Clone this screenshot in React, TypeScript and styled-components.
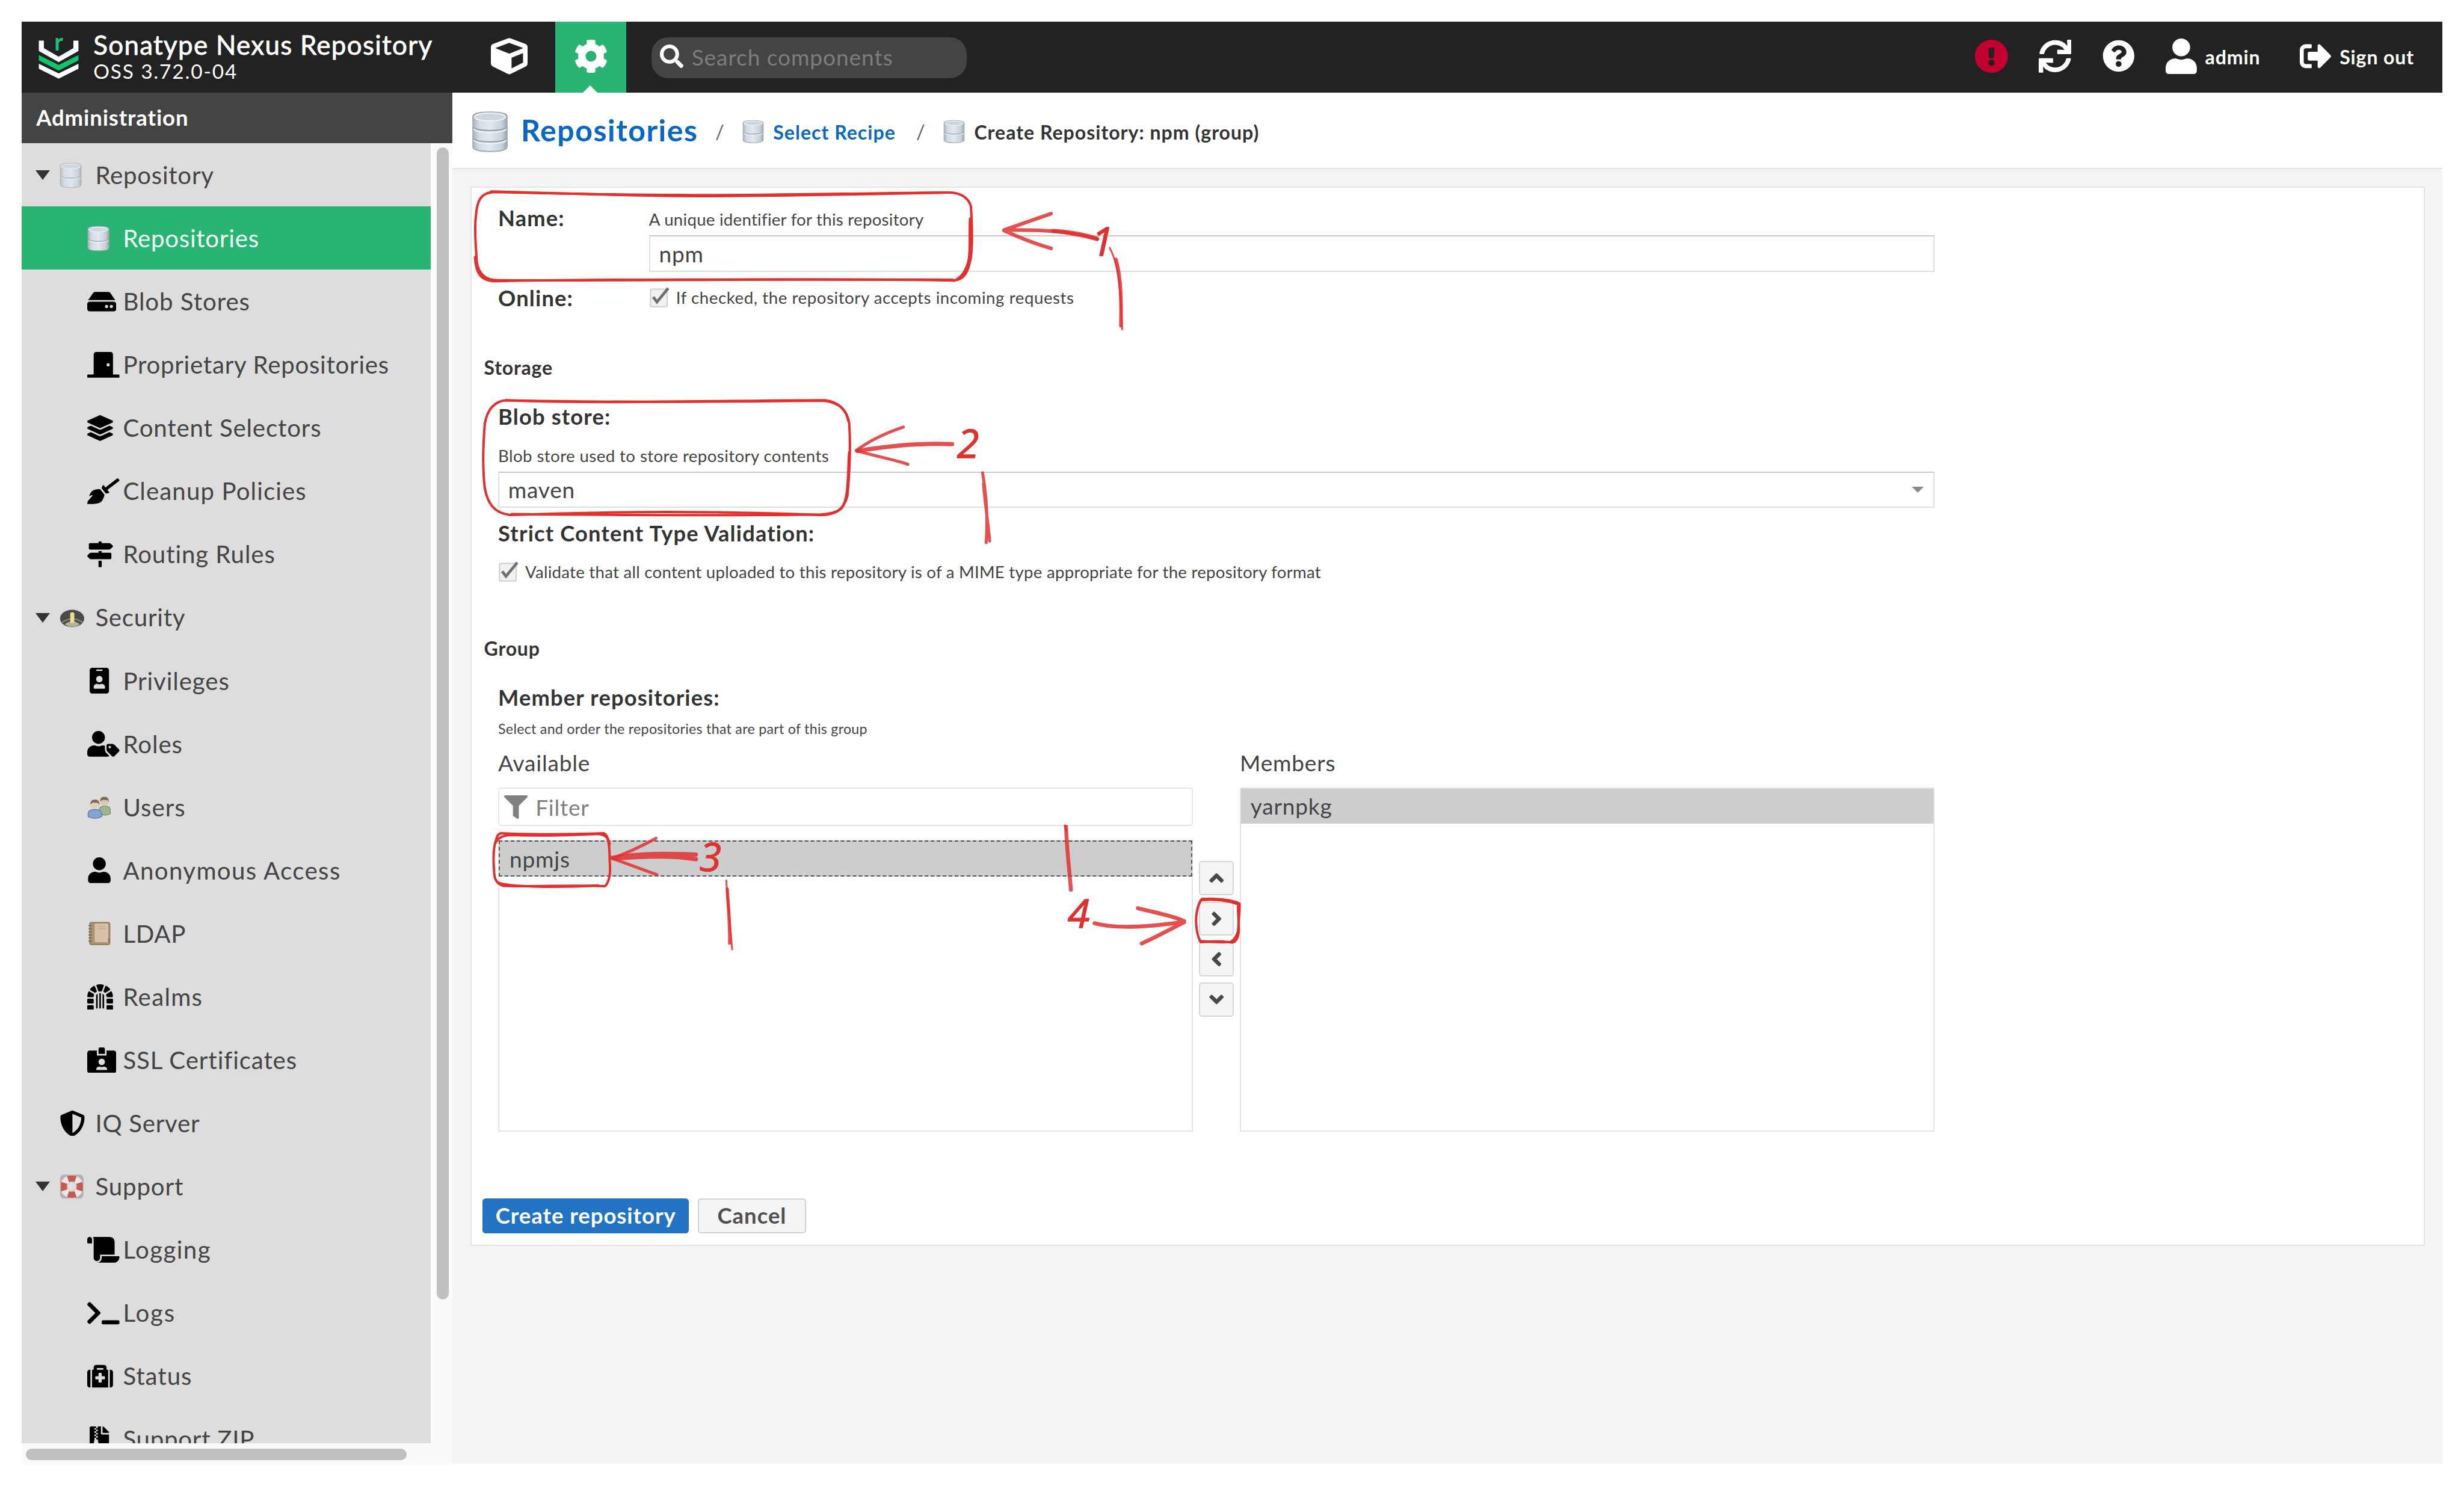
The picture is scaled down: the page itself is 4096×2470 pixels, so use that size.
import React from "react";
import styled, { createGlobalStyle, css } from "styled-components";
import {
  FaAngleDown,
  FaAngleLeft,
  FaAngleRight,
  FaAngleUp,
  FaBroom,
  FaCog,
  FaCube,
  FaDoorClosed,
  FaDungeon,
  FaExclamationCircle,
  FaFileArchive,
  FaFilter,
  FaHdd,
  FaIdBadge,
  FaIdCardAlt,
  FaLayerGroup,
  FaMapSigns,
  FaMedkit,
  FaQuestionCircle,
  FaScroll,
  FaSearch,
  FaShieldAlt,
  FaSignOutAlt,
  FaSync,
  FaTerminal,
  FaUser,
  FaUserTag,
} from "react-icons/fa";

/* 1rem is one layout unit: the page is 1568 units wide. */
const GlobalStyle = createGlobalStyle`
  html { font-size: calc(100vw / 1568); }
  *, *::before, *::after { box-sizing: border-box; }
  body { margin: 0; background: #fff; overflow: hidden; }
  body, input, button {
    font-family: Lato, "Open Sans", sans-serif;
    font-variant-ligatures: none;
  }
`;

const RED = "#e03131";

/* ---------- page frame ---------- */

const Page = styled.div`
  position: relative;
  height: 100vh;
  padding: 13.75rem 13.7rem 14rem 13.75rem;
  color: #333;
  line-height: 1;
`;

const Frame = styled.div`
  display: flex;
  flex-direction: column;
  height: 100%;
  background: #f4f4f4;
  overflow: hidden;
`;

const Body = styled.div`
  display: flex;
  flex: 1;
  min-height: 0;
`;

/* ---------- header ---------- */

const Header = styled.header`
  display: flex;
  align-items: center;
  flex: none;
  height: 45.3rem;
  padding: 0 16.5rem 0 10.5rem;
  background: #222;
  color: #fff;
`;

const LogoSvg = styled.svg`
  flex: none;
  width: 26.4rem;
  height: 28rem;
  margin-top: 1rem;
  overflow: visible;
`;

const Product = styled.div`
  display: flex;
  flex-direction: column;
  width: 244rem;
  padding-left: 8.8rem;
  white-space: nowrap;
`;

const ProductName = styled.div`
  font-size: 16.8rem;
  line-height: 18rem;
  letter-spacing: 0.5rem;
  -webkit-text-stroke: 0.3rem #fff;
`;

const ProductVersion = styled.div`
  font-size: 12.8rem;
  line-height: 15.6rem;
  letter-spacing: 0.7rem;
`;

const ModeTab = styled.div<{ $active?: boolean; $size: number }>`
  position: relative;
  display: flex;
  align-items: center;
  justify-content: center;
  height: 100%;
  width: ${(p) => (p.$active ? 45.4 : 58.6)}rem;
  background: ${(p) => (p.$active ? "#29b473" : "transparent")};
  svg {
    width: ${(p) => p.$size}rem;
    height: ${(p) => p.$size}rem;
    margin-bottom: 1.4rem;
  }
  ${(p) =>
    p.$active &&
    css`
      &::after {
        content: "";
        position: absolute;
        bottom: 0;
        left: 50%;
        margin-left: -4.8rem;
        border: 4.8rem solid transparent;
        border-top: 0;
        border-bottom-color: #fff;
      }
    `}
`;

const SearchBox = styled.div`
  display: flex;
  align-items: center;
  gap: 5.3rem;
  width: 200.5rem;
  height: 26rem;
  margin: 1rem 0 0 16rem;
  padding-left: 5.2rem;
  border-radius: 10.5rem;
  background: #444;
  svg {
    width: 15rem;
    height: 15rem;
    margin-bottom: 2rem;
  }
`;

const Placeholder = styled.span`
  padding-bottom: 1.4rem;
  color: #7d7d7d;
  font-size: 14.2rem;
  letter-spacing: 0.35rem;
`;

const HeaderActions = styled.div`
  display: flex;
  align-items: center;
  margin-left: auto;
  padding-bottom: 1.4rem;
`;

const HeaderIcon = styled.span<{ $size: number; $gap: number; $ratio?: number; $color?: string }>`
  display: flex;
  flex: none;
  margin-right: ${(p) => p.$gap}rem;
  color: ${(p) => p.$color ?? "#fff"};
  svg {
    width: ${(p) => p.$size * (p.$ratio ?? 1)}rem;
    height: ${(p) => p.$size}rem;
  }
`;

const HeaderText = styled.span<{ $width: number }>`
  width: ${(p) => p.$width}rem;
  padding-top: 1.2rem;
  font-size: 12.3rem;
  font-weight: 700;
  letter-spacing: 0.33rem;
  white-space: nowrap;
`;

/* ---------- sidebar ---------- */

const Sidebar = styled.aside`
  display: flex;
  flex-direction: column;
  flex: none;
  width: 274rem;
`;

const SidebarTitle = styled.div`
  flex: none;
  height: 32rem;
  padding-left: 9.3rem;
  background: #444;
  color: #fff;
  font-size: 14rem;
  font-weight: 700;
  letter-spacing: 0.32rem;
  line-height: 31.8rem;
`;

const TreeArea = styled.div`
  display: grid;
  grid-template: minmax(0, 1fr) 13rem / minmax(0, 1fr) 13.5rem;
  flex: 1;
  min-height: 0;
  background: #fafafa;
`;

const Tree = styled.div`
  background: #ddd;
  overflow: hidden;
`;

const TrackY = styled.div`
  padding: 2.7rem 2.3rem 0 3.8rem;
`;

const ThumbY = styled.div`
  height: 733rem;
  border-radius: 4rem;
  background: #c0c0c0;
`;

const TrackX = styled.div`
  padding: 3.2rem 0 0 2.9rem;
`;

const ThumbX = styled.div`
  width: 242rem;
  height: 7.4rem;
  border-radius: 4rem;
  background: #c0c0c0;
`;

const TreeRow = styled.div<{ $level: number; $selected?: boolean }>`
  display: flex;
  align-items: center;
  height: 40.22rem;
  padding-top: 0.6rem;
  padding-left: ${(p) => (p.$level ? 41.8 : 8.9)}rem;
  background: ${(p) => (p.$selected ? "#29b473" : "transparent")};
  color: ${(p) => (p.$selected ? "#f2fff8" : "#444")};
`;

const Expander = styled.span<{ $hidden?: boolean }>`
  width: 15.3rem;
  visibility: ${(p) => (p.$hidden ? "hidden" : "visible")};
  &::before {
    content: "";
    display: block;
    width: 0;
    border: 4.7rem solid transparent;
    border-top: 6.4rem solid #333;
    border-bottom: 0;
  }
`;

const TreeIcon = styled.span<{ $ratio: number }>`
  display: flex;
  align-items: center;
  flex: none;
  width: 22.7rem;
  color: #000;
  svg {
    flex: none;
    width: ${(p) => 16.4 * p.$ratio}rem;
    height: 16.4rem;
  }
`;

const TreeLabel = styled.span<{ $tracking: number }>`
  font-size: 15.4rem;
  letter-spacing: ${(p) => p.$tracking}rem;
  white-space: nowrap;
`;

/* ---------- main column ---------- */

const Main = styled.main`
  display: flex;
  flex-direction: column;
  flex: 1;
  min-width: 0;
`;

const Crumbs = styled.nav`
  display: flex;
  align-items: center;
  flex: none;
  height: 48.4rem;
  padding: 2.4rem 0 0 12.4rem;
  border-bottom: 0.9rem solid #e4e4e4;
  background: #fff;
  white-space: nowrap;
`;

const CrumbIcon = styled.span<{ $width: number; $height: number }>`
  display: flex;
  margin-bottom: 0.6rem;
  svg {
    width: ${(p) => p.$width}rem;
    height: ${(p) => p.$height}rem;
  }
`;

const CrumbTitle = styled.span`
  width: 123.6rem;
  padding-bottom: 3rem;
  margin-left: 8rem;
  color: #0b68c2;
  font-size: 19.2rem;
  font-weight: 700;
  letter-spacing: 0.56rem;
`;

const Slash = styled.span`
  width: 17.2rem;
  color: #666;
  font-size: 12.5rem;
`;

const Crumb = styled.span<{ $link?: boolean }>`
  width: ${(p) => (p.$link ? "91rem" : "auto")};
  margin-left: 5.9rem;
  color: ${(p) => (p.$link ? "#0b68c2" : "#333")};
  font-size: 12.3rem;
  font-weight: 700;
  letter-spacing: 0.37rem;
`;

const Panel = styled.section`
  display: flex;
  flex-direction: column;
  margin: 11.4rem 11.3rem 0 11.5rem;
  height: 674rem;
  padding: 10rem 0 0 8rem;
  border: 0.9rem solid #e4e4e4;
  background: #fff;
`;

const Fields = styled.div`
  display: flex;
  flex-direction: column;
  width: 914rem;
  margin-left: 9rem;
`;

const FieldRow = styled.div<{ $height?: number }>`
  display: grid;
  grid-template-columns: 96rem 1fr;
  align-items: ${(p) => (p.$height ? "center" : "start")};
  height: ${(p) => (p.$height ? `${p.$height}rem` : "auto")};
`;

const SectionTitle = styled.h2<{ $top: number }>`
  margin: ${(p) => p.$top}rem 0 0;
  font-size: 12.3rem;
  font-weight: 700;
  letter-spacing: 0.28rem;
  line-height: 20rem;
`;

const Label = styled.div<{ $top?: number; $line?: number }>`
  margin-top: ${(p) => p.$top ?? 0}rem;
  font-size: 13.9rem;
  font-weight: 700;
  letter-spacing: 0.44rem;
  line-height: ${(p) => p.$line ?? 20}rem;
`;

const Help = styled.div<{ $top?: number; $small?: boolean; $tracking?: number }>`
  margin-top: ${(p) => p.$top ?? 0}rem;
  color: #444;
  font-size: ${(p) => (p.$small ? 8.9 : 10.6)}rem;
  letter-spacing: ${(p) => p.$tracking ?? 0.12}rem;
  line-height: 20rem;
`;

const inputBox = css`
  display: flex;
  align-items: center;
  padding: 0 6rem 0 5.6rem;
  border: 0.9rem solid #e0e0e0;
  background: #fff;
  color: #444;
  font-size: 14.2rem;
  letter-spacing: 0.3rem;
`;

const TextInput = styled.div`
  ${inputBox}
  height: 23.3rem;
  border-top-color: #c9c9c9;
`;

const Select = styled.div`
  ${inputBox}
  justify-content: space-between;
  height: 23rem;
  border-top-color: #c9c9c9;
  &::after {
    content: "";
    border: 4rem solid transparent;
    border-top: 4.2rem solid #8a8a8a;
    border-bottom: 0;
  }
`;

const CheckRow = styled.div<{ $top?: number }>`
  display: flex;
  align-items: center;
  height: 20rem;
  margin-top: ${(p) => p.$top ?? 0}rem;
  gap: 5.2rem;
`;

const Box = styled.span`
  display: block;
  width: 12rem;
  height: 20rem;
  svg {
    display: block;
    width: 14rem;
    height: 20rem;
  }
`;

/* ---------- member picker ---------- */

const Picker = styled.div`
  display: grid;
  grid-template-columns: 442rem 30rem 442rem;
`;

const PickerHead = styled.div`
  margin: 1.8rem 0 5.6rem;
  color: #444;
  font-size: 14.2rem;
  letter-spacing: 0.3rem;
  line-height: 20rem;
`;

const PickerColumn = styled.div`
  display: flex;
  flex-direction: column;
  height: 218.9rem;
`;

const FilterBox = styled.div`
  ${inputBox}
  flex: none;
  height: 24.6rem;
  margin-bottom: 8.6rem;
  padding-left: 3rem;
  gap: 5rem;
  border-color: #e6e6e6;
  border-radius: 2rem;
  color: #808080;
  svg {
    width: 15rem;
    height: 15rem;
  }
`;

const List = styled.div`
  flex: 1;
  border: 0.9rem solid #e4e4e4;
  background: #fff;
`;

const ListRow = styled.div<{ $focused?: boolean }>`
  display: flex;
  align-items: center;
  height: ${(p) => (p.$focused ? 23.2 : 22)}rem;
  margin: ${(p) => (p.$focused ? "-0.4rem -0.5rem 0" : "0")};
  padding-left: ${(p) => (p.$focused ? 6.2 : 6)}rem;
  border: ${(p) => (p.$focused ? "1rem dashed #555" : "0")};
  background: #cdcdcd;
  color: #444;
  font-size: 14.2rem;
  letter-spacing: 0.3rem;
`;

const MoveButtons = styled.div`
  display: flex;
  flex-direction: column;
  align-items: center;
  gap: 4.1rem;
  padding-top: 46.7rem;
`;

const MoveButton = styled.button`
  display: flex;
  align-items: center;
  justify-content: center;
  width: 22.4rem;
  height: 21.7rem;
  padding: 0;
  border: 0.9rem solid #d6d6d6;
  border-radius: 2rem;
  background: #f5f5f5;
  color: #484848;
  svg {
    width: 14rem;
    height: 14rem;
    stroke: currentColor;
    stroke-width: 14;
  }
`;

const Actions = styled.div`
  display: flex;
  gap: 5.6rem;
  margin: 42.6rem 0 0 -1rem;
`;

const Button = styled.button<{ $primary?: boolean }>`
  width: ${(p) => (p.$primary ? 131.5 : 68.8)}rem;
  height: 22.1rem;
  padding: 0;
  border: 0.9rem solid ${(p) => (p.$primary ? "#2273c3" : "#d2d2d2")};
  border-radius: 2rem;
  background: ${(p) => (p.$primary ? "#2273c3" : "#f5f5f5")};
  color: ${(p) => (p.$primary ? "#fff" : "#505050")};
  font-size: 14rem;
  font-weight: 700;
  letter-spacing: 0.36rem;
  line-height: 19rem;
`;

/* ---------- hand-drawn notes ---------- */

const Notes = styled.svg`
  position: absolute;
  inset: 0;
  width: 100%;
  height: 100%;
  pointer-events: none;
  fill: none;
  stroke: ${RED};
  stroke-linecap: round;
  stroke-linejoin: round;
  path {
    vector-effect: non-scaling-stroke;
  }
`;

const Stroke = styled.path<{ $w?: number; $soft?: boolean }>`
  stroke-width: ${(p) => p.$w ?? 4}px;
  opacity: ${(p) => (p.$soft ? 0.85 : 1)};
`;

const NoteDigit = styled.text`
  fill: ${RED};
  stroke: ${RED};
  stroke-width: 0.5px;
  font-family: "Open Sans", sans-serif;
  font-style: italic;
  font-weight: 400;
  font-size: 25.5px;
`;

/* ---------- drawings ---------- */

const Logo = () => (
  <LogoSvg viewBox="24.2 23.5 26.4 28">
    <text x="34.6" y="32.6" fill="#1fbf75" fontSize="15" fontFamily="Lato" fontWeight="700">
      r
    </text>
    <path fill="#fff" d="M24.8 26.4H28V31.2L37.4 36.6L46.8 31.2V26.4H50V33L37.4 40.1L24.8 33Z" />
    <path fill="#12c46c" d="M24.8 35.6L37.4 41.9L50 35.6V39L37.4 45.4L24.8 39Z" />
    <path fill="#fff" d="M24.8 41.1L37.4 47.2L50 41.1V44.3L37.4 50.6L24.8 44.3Z" />
  </LogoSvg>
);

const Database = ({ tiers = 2, faded = false }: { tiers?: number; faded?: boolean }) => {
  const id = `db${tiers}${faded ? "f" : ""}`;
  const step = 26 / tiers;
  return (
    <svg viewBox="0 0 28 32" preserveAspectRatio="none" opacity={faded ? 0.75 : 1}>
      <defs>
        <linearGradient id={id} x1="0" x2="1">
          <stop offset="0" stopColor="#a9b4be" />
          <stop offset="0.18" stopColor="#d3dce4" />
          <stop offset="0.5" stopColor="#e2e9ef" />
          <stop offset="0.85" stopColor="#c6d0d9" />
          <stop offset="1" stopColor="#98a3ad" />
        </linearGradient>
      </defs>
      <path
        d="M1 4.5C1 2 6 1 14 1S27 2 27 4.5V27.5C27 30 22 31.2 14 31.2S1 30 1 27.5Z"
        fill={`url(#${id})`}
        stroke="#a3abb2"
        strokeWidth="0.9"
      />
      <ellipse cx="14" cy="4.8" rx="11.8" ry="3" fill="#cbd6df" stroke="#f2f6f9" strokeWidth="0.8" />
      {Array.from({ length: tiers - 1 }, (_, i) => {
        const y = 4 + step * (i + 1);
        return (
          <g key={i} fill="none">
            <path d={`M1.4 ${y}C3 ${y + 3.4} 25 ${y + 3.4} 26.6 ${y}`} stroke="#94a2ae" strokeWidth="1" />
            <path d={`M1.6 ${y + 1.3}C4 ${y + 4.6} 24 ${y + 4.6} 26.4 ${y + 1.3}`} stroke="#f1f5f8" strokeWidth="0.9" />
          </g>
        );
      })}
    </svg>
  );
};

const SecurityIcon = () => (
  <svg viewBox="0 0 16 16">
    <ellipse cx="7.8" cy="8.6" rx="7.5" ry="5.4" fill="#4a4a47" />
    <path d="M3.2 12.2Q8 8.6 12.6 12.2Q10.6 13.8 8 13.8T3.2 12.2Z" fill="#b5b194" />
    <path d="M1.6 11Q8 6.6 14.2 11" fill="none" stroke="#8b887b" strokeWidth="0.8" />
    <rect x="6.6" y="4.8" width="2.6" height="6.6" rx="1.1" fill="#f0dc93" />
  </svg>
);

const UsersIcon = () => (
  <svg viewBox="0 0 16 16">
    <path d="M8 13V9.5Q8.5 7.4 12 7.4T15.6 10V12.6Q14 13.6 11 13.4Z" fill="#9fb58e" stroke="#75896a" strokeWidth="0.5" />
    <circle cx="11.6" cy="4.4" r="2.9" fill="#dcc8ad" />
    <path d="M8.7 4.2Q8.6 1 11.6 1T14.6 4.6L13.6 3.4L10.4 3.2Z" fill="#7b6a57" />
    <path d="M.6 14.4V12Q1 9.6 5.2 9.6T9.8 12V14.4Q8 15.6 5.2 15.6T.6 14.4Z" fill="#7fa5d3" stroke="#5578a6" strokeWidth="0.5" />
    <circle cx="5.2" cy="6.4" r="3" fill="#e3d0b6" />
    <path d="M2.1 6.4Q2 3 5.2 3T8.3 6.6L7.2 5.2L3.6 5Z" fill="#7b6a57" />
  </svg>
);

const BookIcon = () => (
  <svg viewBox="0 0 16 16">
    <rect x="1.6" y="0.9" width="13" height="14.4" rx="1.2" fill="#ab9374" stroke="#8c775d" strokeWidth="0.6" />
    <rect x="4.8" y="1.7" width="8.8" height="12" rx="0.6" fill="#d8c2a6" />
    <path d="M7 3.6H12M7 5H12" stroke="#c6ab8b" strokeWidth="0.6" />
    <path d="M.9 3H3M.9 5H3M.9 7H3M.9 9H3M.9 11H3M.9 13H3" stroke="#7a6853" strokeWidth="0.7" />
    <path d="M13.6 11.4L14.5 13.6" stroke="#b4533f" strokeWidth="0.7" />
  </svg>
);

const LifebuoyIcon = () => (
  <svg viewBox="0 0 16 16">
    <rect x="0.3" y="0.6" width="14.6" height="14.8" rx="2.4" fill="#b4b2b1" />
    <circle cx="7.6" cy="8" r="5" fill="none" stroke="#ebe5e3" strokeWidth="4.4" />
    <path d="M4.6 1.4Q7.6 .6 10.6 1.4L9.3 5.2Q7.6 4.6 5.9 5.2ZM4.6 14.6Q7.6 15.4 10.6 14.6L9.3 10.8Q7.6 11.4 5.9 10.8ZM1 5Q.2 8 1 11L4.8 9.7Q4.2 8 4.8 6.3ZM14.2 5Q15 8 14.2 11L10.4 9.7Q11 8 10.4 6.3Z" fill="#c25b54" />
    <circle cx="7.6" cy="8" r="2.6" fill="#e0e0e0" />
  </svg>
);

const CheckMark = () => (
  <Box>
    <svg viewBox="0 0 14 20">
      <rect x="0.9" y="4.4" width="10.6" height="11.2" rx="0.8" fill="#f1f1f1" stroke="#cfcfcf" strokeWidth="0.8" />
      <path d="M2.6 9.4L5 12.6L12.2 3.8" fill="none" stroke="#707070" strokeWidth="1.8" />
    </svg>
  </Box>
);

/* ---------- data ---------- */

type Node = {
  label: string;
  icon: React.ReactNode;
  level?: number;
  /* icon width divided by its height */
  ratio?: number;
  tracking?: number;
  leaf?: boolean;
  selected?: boolean;
};

const NODES: Node[] = [
  { label: "Repository", icon: <Database faded />, ratio: 0.87 },
  { label: "Repositories", icon: <Database />, level: 1, ratio: 0.87, selected: true },
  { label: "Blob Stores", icon: <FaHdd />, level: 1, ratio: 1.125, tracking: 0.36 },
  { label: "Proprietary Repositories", icon: <FaDoorClosed />, level: 1, ratio: 1.25 },
  { label: "Content Selectors", icon: <FaLayerGroup />, level: 1, tracking: 0.32 },
  { label: "Cleanup Policies", icon: <FaBroom />, level: 1, ratio: 1.25, tracking: 0.42 },
  { label: "Routing Rules", icon: <FaMapSigns />, level: 1, tracking: 0.34 },
  { label: "Security", icon: <SecurityIcon /> },
  { label: "Privileges", icon: <FaIdBadge />, level: 1, ratio: 0.94, tracking: 0.34 },
  { label: "Roles", icon: <FaUserTag />, level: 1, ratio: 1.25, tracking: 0.36 },
  { label: "Users", icon: <UsersIcon />, level: 1, ratio: 0.92, tracking: 0.4 },
  { label: "Anonymous Access", icon: <FaUser />, level: 1, ratio: 0.94, tracking: 0.53 },
  { label: "LDAP", icon: <BookIcon />, level: 1, ratio: 0.96 },
  { label: "Realms", icon: <FaDungeon />, level: 1, tracking: 0.5 },
  { label: "SSL Certificates", icon: <FaIdCardAlt />, level: 1, ratio: 1.125, tracking: 0.34 },
  { label: "IQ Server", icon: <FaShieldAlt />, leaf: true },
  { label: "Support", icon: <LifebuoyIcon />, tracking: 0.34 },
  { label: "Logging", icon: <FaScroll />, level: 1, ratio: 1.25, tracking: 0.55 },
  { label: "Logs", icon: <FaTerminal />, level: 1, ratio: 1.25, tracking: 0.7 },
  { label: "Status", icon: <FaMedkit />, level: 1, tracking: 0.36 },
  { label: "Support ZIP", icon: <FaFileArchive />, level: 1, ratio: 0.94 },
];

const TopBar = () => (
  <Header>
    <Logo />
    <Product>
      <ProductName>Sonatype Nexus Repository</ProductName>
      <ProductVersion>OSS 3.72.0-04</ProductVersion>
    </Product>
    <ModeTab $size={23.4}>
      <FaCube />
    </ModeTab>
    <ModeTab $active $size={21.8}>
      <FaCog />
    </ModeTab>
    <SearchBox>
      <FaSearch />
      <Placeholder>Search components</Placeholder>
    </SearchBox>
    <HeaderActions>
      <HeaderIcon $size={21.8} $gap={18.9} $color="#c1002f">
        <FaExclamationCircle />
      </HeaderIcon>
      <HeaderIcon $size={21} $gap={19.6}>
        <FaSync />
      </HeaderIcon>
      <HeaderIcon $size={20.6} $gap={19.8}>
        <FaQuestionCircle />
      </HeaderIcon>
      <HeaderIcon $size={22.7} $ratio={0.875} $gap={5.2}>
        <FaUser />
      </HeaderIcon>
      <HeaderText $width={60.4}>admin</HeaderText>
      <HeaderIcon $size={20.2} $gap={5}>
        <FaSignOutAlt />
      </HeaderIcon>
      <HeaderText $width={49}>Sign out</HeaderText>
    </HeaderActions>
  </Header>
);

const Navigation = () => (
  <Sidebar>
    <SidebarTitle>Administration</SidebarTitle>
    <TreeArea>
      <Tree>
        {NODES.map((n) => (
          <TreeRow key={n.label} $level={n.level ?? 0} $selected={n.selected}>
            {!n.level && <Expander $hidden={n.leaf} />}
            <TreeIcon $ratio={n.ratio ?? 1}>{n.icon}</TreeIcon>
            <TreeLabel $tracking={n.tracking ?? 0.28}>{n.label}</TreeLabel>
          </TreeRow>
        ))}
      </Tree>
      <TrackY>
        <ThumbY />
      </TrackY>
      <TrackX>
        <ThumbX />
      </TrackX>
    </TreeArea>
  </Sidebar>
);

const RepositoryForm = () => (
  <Panel>
    <Fields>
      <FieldRow>
        <Label $line={18}>Name:</Label>
        <div>
          <Help $tracking={0.09}>A unique identifier for this repository</Help>
          <TextInput>npm</TextInput>
        </div>
      </FieldRow>
      <FieldRow $height={33}>
        <Label $line={17}>Online:</Label>
        <CheckRow>
          <CheckMark />
          <Help $tracking={0.21}>If checked, the repository accepts incoming requests</Help>
        </CheckRow>
      </FieldRow>
    </Fields>

    <SectionTitle $top={17.9}>Storage</SectionTitle>
    <Fields>
      <Label $top={11.3}>Blob store:</Label>
      <Help $top={5} $tracking={0.15}>Blob store used to store repository contents</Help>
      <Select>maven</Select>
      <Label $top={6.2}>Strict Content Type Validation:</Label>
      <CheckRow $top={4.8}>
        <CheckMark />
        <Help $tracking={0.09}>
          Validate that all content uploaded to this repository is of a MIME type appropriate for the repository format
        </Help>
      </CheckRow>
    </Fields>

    <SectionTitle $top={28.5}>Group</SectionTitle>
    <Fields>
      <Label $top={11.2}>Member repositories:</Label>
      <Help $small $tracking={0.1}>Select and order the repositories that are part of this group</Help>
      <Picker>
        <PickerHead>Available</PickerHead>
        <span />
        <PickerHead>Members</PickerHead>
        <PickerColumn>
          <FilterBox>
            <FaFilter />
            Filter
          </FilterBox>
          <List>
            <ListRow $focused>npmjs</ListRow>
          </List>
        </PickerColumn>
        <MoveButtons>
          {[FaAngleUp, FaAngleRight, FaAngleLeft, FaAngleDown].map((Icon, i) => (
            <MoveButton key={i}>
              <Icon />
            </MoveButton>
          ))}
        </MoveButtons>
        <PickerColumn>
          <List>
            <ListRow>yarnpkg</ListRow>
          </List>
        </PickerColumn>
      </Picker>
    </Fields>
    <Actions>
      <Button $primary>Create repository</Button>
      <Button>Cancel</Button>
    </Actions>
  </Panel>
);

const HandNotes = () => (
  <Notes viewBox="0 0 1568 945.5" preserveAspectRatio="none">
    <g transform="translate(288.6 109.9) scale(.28484 .15336)">
      <Stroke d="M92 80C60 80 52 120 50 180C46 240 50 300 52 370C56 420 72 446 98 446C400 450 800 436 1116 447C1142 446 1150 410 1156 350C1160 290 1158 200 1156 140C1150 100 1130 82 1106 82C900 84 700 96 500 92C350 92 200 84 92 80" />
      <Stroke d="M84 78C300 88 420 98 560 97C760 96 960 88 1106 82M48 350C50 420 62 448 90 450C350 440 800 442 1116 444M1154 190C1152 260 1156 330 1150 370C1146 400 1136 436 1118 448" />
      <Stroke $w={6} $soft d="M1230 238L1335 170M1230 240C1265 270 1300 295 1335 314M1230 238C1310 236 1370 240 1438 276" />
      <Stroke $w={7} $soft d="M1340 242C1380 246 1412 258 1438 274" />
      <Stroke $w={3} $soft d="M1466 312C1486 380 1490 480 1494 650" />
      <Stroke $w={6} $soft d="M1480 360C1492 440 1492 540 1491 635" />
      <Stroke d="M118 944C300 954 600 950 826 946C866 954 880 990 884 1040C888 1150 884 1260 880 1340C872 1400 852 1420 820 1420C600 1404 360 1404 126 1420C90 1412 76 1370 70 1310C64 1220 66 1130 70 1040C76 980 92 948 118 944" />
      <Stroke d="M118 944C320 960 600 944 830 944C860 950 878 986 882 1030M884 1160C880 1260 884 1340 868 1390C858 1410 842 1416 820 1418C600 1424 360 1420 130 1416" />
      <Stroke $w={5} $soft d="M900 1152C930 1110 965 1080 1005 1055M902 1154C950 1180 985 1190 1015 1210" />
      <Stroke $w={7} $soft d="M902 1154C960 1138 1030 1120 1114 1126" />
      <Stroke $w={5} $soft d="M1182 1245C1190 1330 1194 1430 1190 1535M1184 1290C1188 1380 1194 1450 1198 1528" />
    </g>
    <g transform="translate(288.6 474.1) scale(.3067 .11451)">
      <Stroke d="M98 490C160 498 240 496 312 490C322 500 324 560 324 640C326 700 324 760 314 784C250 774 170 790 104 782C88 770 84 740 84 690C82 620 84 560 88 530C90 505 92 495 98 490" />
      <Stroke d="M88 540C94 510 104 504 116 500C180 506 250 500 300 494C316 496 322 520 324 550M92 764C110 784 200 796 300 780" />
      <Stroke $w={5} $soft d="M330 628C365 595 395 555 420 518M330 630C365 665 392 690 422 720" />
      <Stroke $w={7} $soft d="M330 626C390 600 440 602 503 608M334 630C400 618 450 612 503 634" />
      <Stroke $w={3} $soft d="M566 752C568 850 574 980 578 1135" />
      <Stroke $w={5.5} $soft d="M568 800C570 900 574 1000 573 1100" />
      <Stroke $w={6.5} $soft d="M1271 454C1272 560 1278 700 1281 803" />
      <Stroke $w={3} $soft d="M1268 446L1272 480" />
      <Stroke $w={6.5} $soft d="M1330 990C1370 1020 1440 1012 1516 982M1420 906C1450 928 1490 945 1516 978M1428 1102C1456 1070 1482 1030 1516 984" />
    </g>
    <g transform="translate(652.7 474.1) scale(.17527 .12269)">
      <Stroke d="M640 798C680 794 750 800 776 822C780 850 770 900 774 960C772 1000 765 1020 750 1024C720 1016 680 1016 636 1022C622 990 616 930 620 880C624 840 630 812 640 798" />
      <Stroke d="M636 804C690 796 740 808 772 826C768 860 778 920 770 970C764 996 756 1010 746 1020C710 1026 670 1020 632 1016" />
    </g>
    <NoteDigit x="694.5" y="162.8">1</NoteDigit>
    <NoteDigit x="609" y="291.2">2</NoteDigit>
    <NoteDigit x="445" y="554.4">3</NoteDigit>
    <NoteDigit x="679.4" y="590.4">4</NoteDigit>
  </Notes>
);

export default function App() {
  return (
    <Page>
      <GlobalStyle />
      <Frame>
        <TopBar />
        <Body>
          <Navigation />
          <Main>
            <Crumbs>
              <CrumbIcon $width={23.4} $height={26.6}>
                <Database tiers={3} />
              </CrumbIcon>
              <CrumbTitle>Repositories</CrumbTitle>
              <Slash>/</Slash>
              <CrumbIcon $width={13.8} $height={15}>
                <Database />
              </CrumbIcon>
              <Crumb $link>Select Recipe</Crumb>
              <Slash>/</Slash>
              <CrumbIcon $width={13.8} $height={15}>
                <Database />
              </CrumbIcon>
              <Crumb>Create Repository: npm (group)</Crumb>
            </Crumbs>
            <RepositoryForm />
          </Main>
        </Body>
      </Frame>
      <HandNotes />
    </Page>
  );
}
